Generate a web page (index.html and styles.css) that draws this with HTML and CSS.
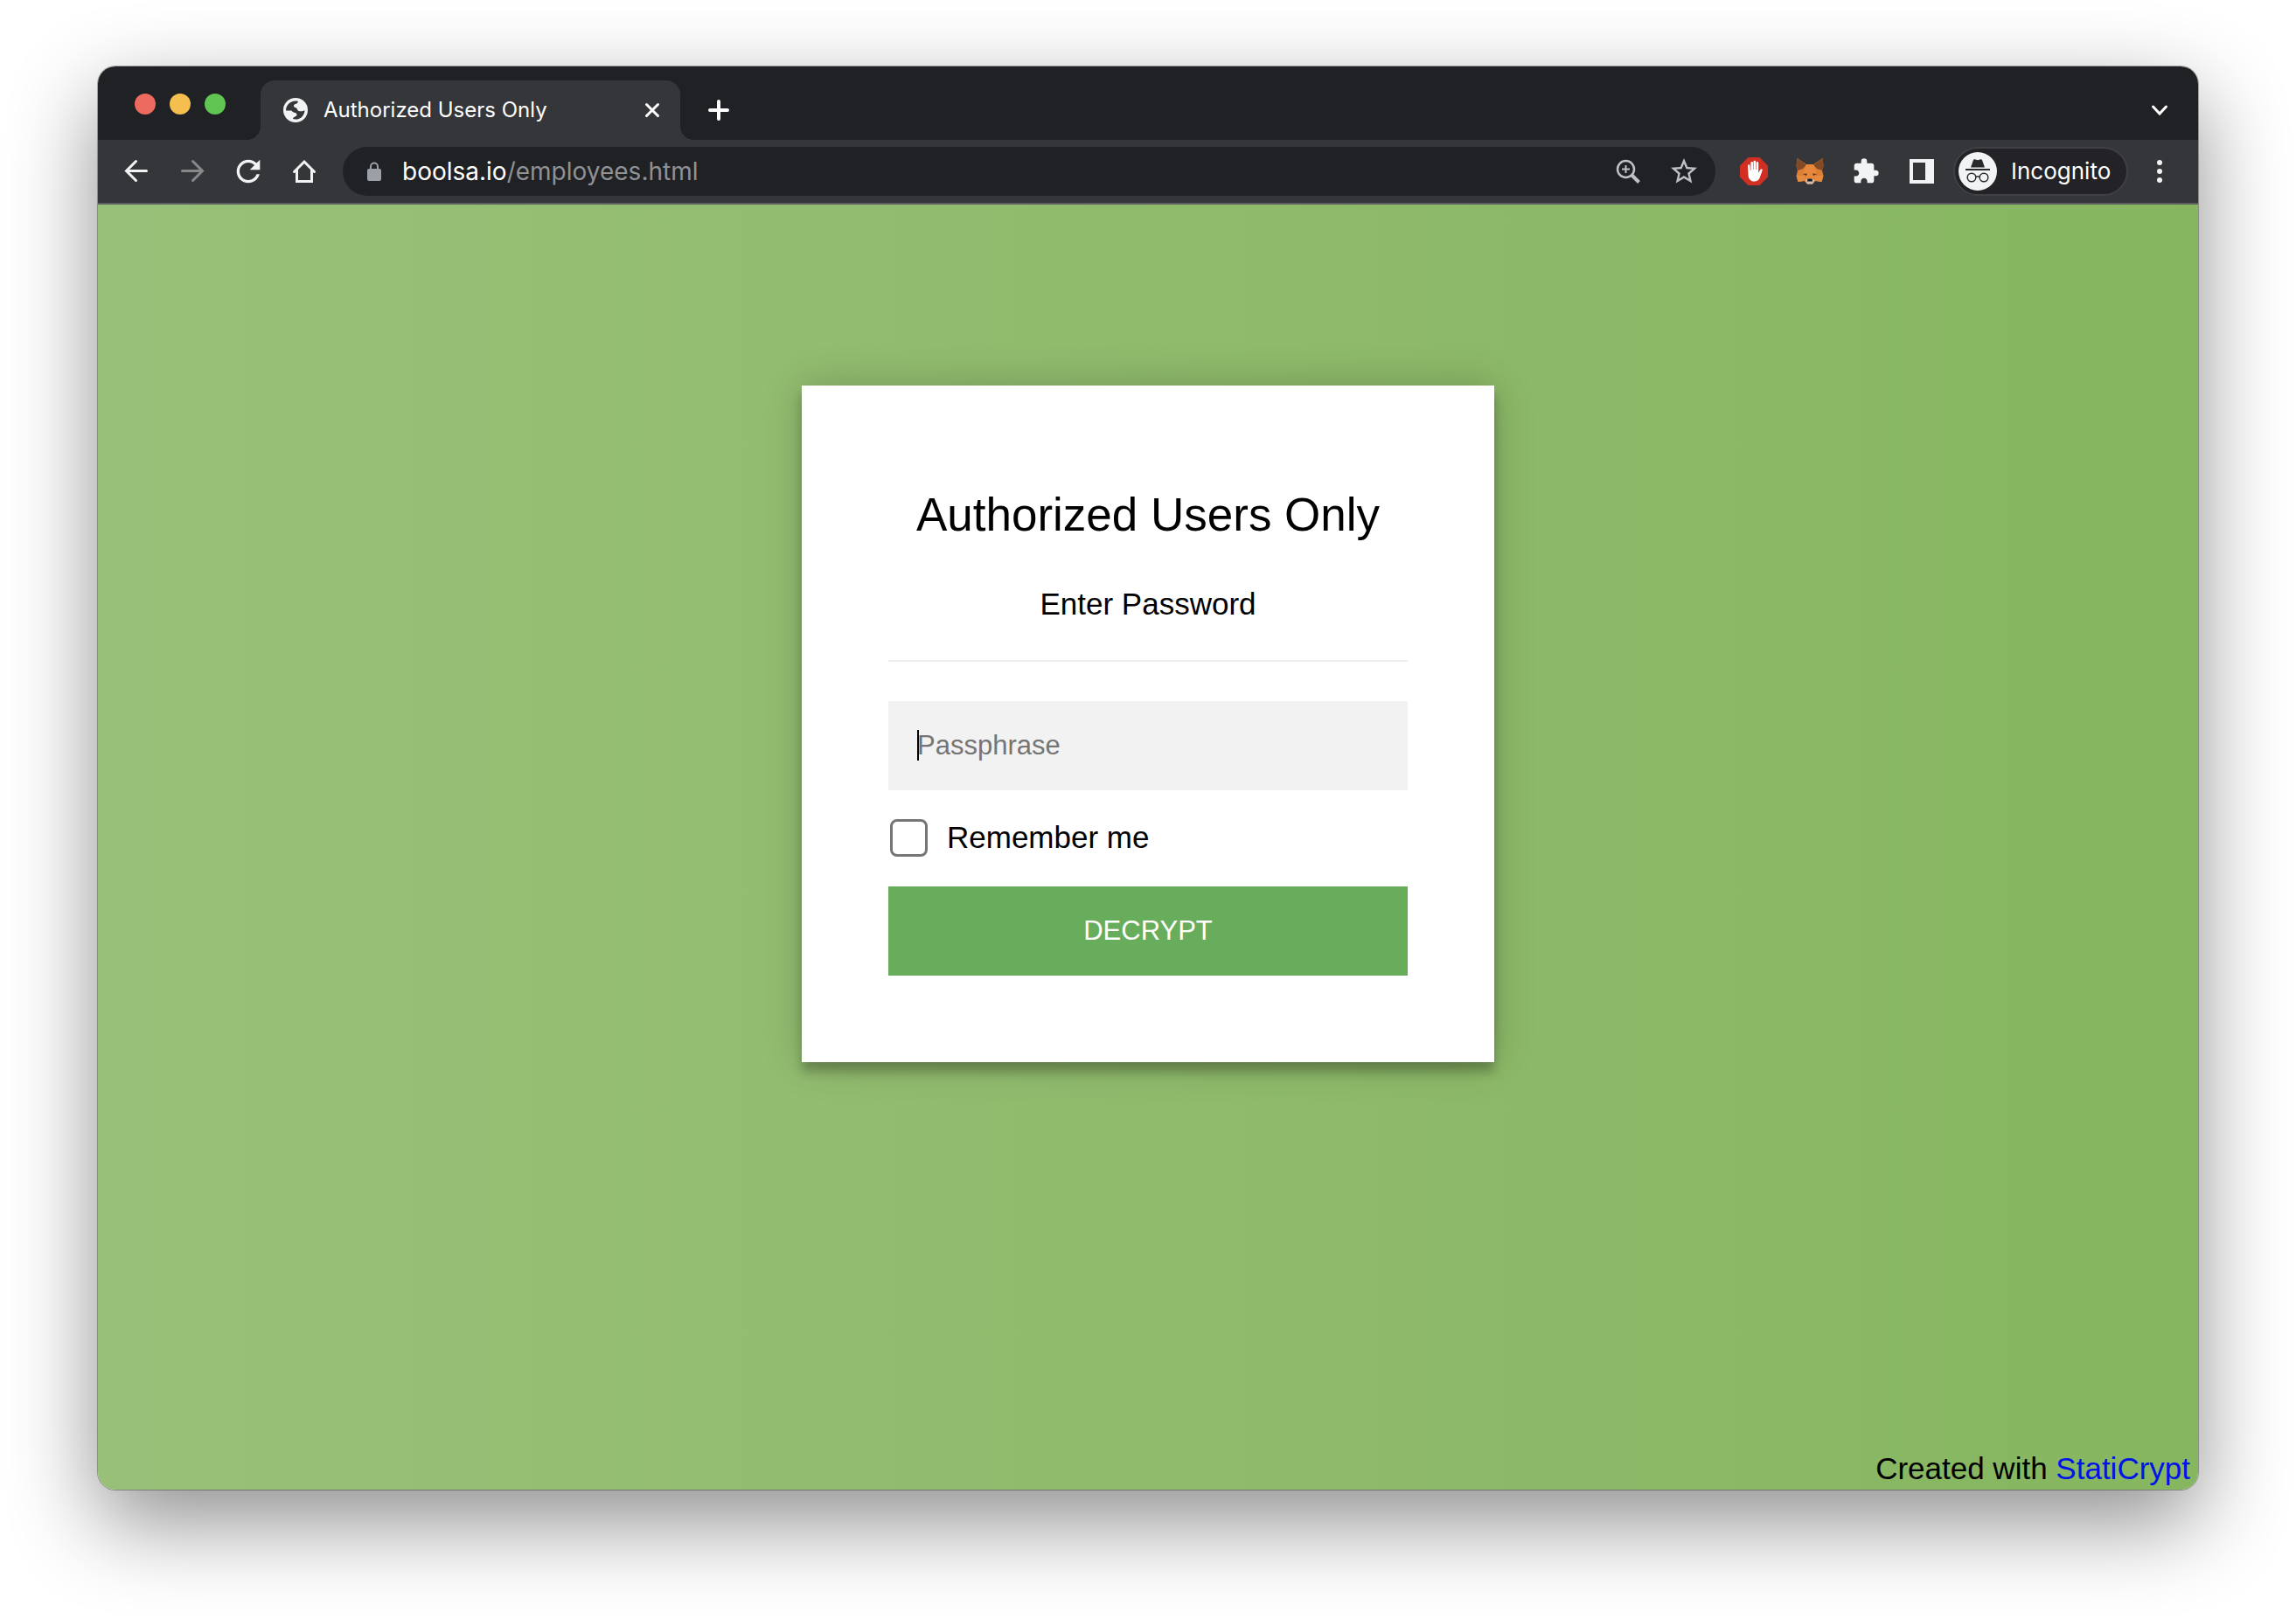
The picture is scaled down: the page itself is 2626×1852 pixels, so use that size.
FILE: index.html
```html
<!DOCTYPE html>
<html lang="en">
<head>
<meta charset="utf-8">
<title>Authorized Users Only</title>
<link rel="stylesheet" href="styles.css">
</head>
<body>
<div class="window">
  <header class="tab-strip">
    <div class="traffic-lights">
      <button class="light light-close" aria-label="Close window"></button>
      <button class="light light-minimize" aria-label="Minimize window"></button>
      <button class="light light-zoom" aria-label="Zoom window"></button>
    </div>
    <div class="tab">
      <svg class="favicon" viewBox="0 0 28 28" width="28" height="28" aria-hidden="true">
        <circle cx="14" cy="14" r="14" fill="#f1f3f4"/>
        <path d="M3 14.500c0-6 4.500-11 11-11 1 0 2 .1 3 .4-.4 1.600-1.300 2.600-3 3-1.300.3-2 .9-2 2 0 1.300.9 2 2.500 2.300 1.700.3 1.300 3.300 3.300 3.900 2.500.6 4.700.2 6.700-1.200-.2 6.200-4.800 10.600-10.500 10.600-1 0-2-.1-3-.4.2-1.500 1-2.300 2.400-2.700 1.500-.4 2.100-1.100 2.100-2.100 0-1.600-1.100-2.500-3-2.600-1.900-.1-2-1.900-3.500-2.200z" fill="#35363a"/>
      </svg>
      <span class="tab-title">Authorized Users Only</span>
      <button class="icon-button tab-close" aria-label="Close tab">
        <svg viewBox="0 0 20 20" width="20" height="20"><path d="M3.500 3.500l13 13M16.500 3.500l-13 13" class="stroke"/></svg>
      </button>
    </div>
    <button class="icon-button new-tab" aria-label="New tab">
      <svg viewBox="0 0 24 24" width="24" height="24"><path d="M12 2v20M2 12h20" class="stroke stroke-bold"/></svg>
    </button>
    <button class="icon-button tab-search" aria-label="Search tabs">
      <svg viewBox="0 0 24 24" width="24" height="24"><path d="M4.500 8l7.500 8 7.500-8" class="stroke"/></svg>
    </button>
  </header>

  <nav class="toolbar" aria-label="Browser toolbar">
    <div class="button-group">
      <button class="icon-button" aria-label="Back">
        <svg viewBox="0 0 32 32" width="32" height="32"><path d="M15.500 4.500L4.500 15.500l11 11M4.500 15.500h23" class="stroke"/></svg>
      </button>
      <button class="icon-button icon-dim" aria-label="Forward">
        <svg viewBox="0 0 32 32" width="32" height="32"><path d="M16.500 4.500l11 11-11 11M27.500 15.500h-23" class="stroke"/></svg>
      </button>
      <button class="icon-button" aria-label="Reload">
        <svg viewBox="0 0 24 24" width="40" height="40"><path d="M17.650 6.350C16.200 4.900 14.210 4 12 4c-4.420 0-7.990 3.580-7.990 8s3.570 8 7.990 8c3.730 0 6.840-2.550 7.730-6h-2.080c-.82 2.330-3.040 4-5.650 4-3.310 0-6-2.690-6-6s2.690-6 6-6c1.660 0 3.140.69 4.220 1.780L13 11h7V4z" fill="currentColor"/></svg>
      </button>
      <button class="icon-button" aria-label="Home">
        <svg viewBox="0 0 32 32" width="32" height="32"><path d="M4.500 16.500L16 5l11.500 11.500M7.500 14v13.500h17V14" class="stroke"/></svg>
      </button>
    </div>
    <div class="address-bar">
      <svg class="lock" viewBox="0 0 16 22" width="16" height="22" aria-hidden="true">
        <rect x="0" y="8" width="16" height="14" rx="2" fill="#9aa0a6"/>
        <path d="M4 8.500V5.500a4 4 0 0 1 8 0v3" fill="none" stroke="#9aa0a6" stroke-width="2"/>
      </svg>
      <span class="url"><span class="url-host">boolsa.io</span>/employees.html</span>
      <button class="icon-button icon-grey" aria-label="Zoom">
        <svg viewBox="0 0 28 28" width="28" height="28" fill="none" stroke="currentColor">
          <circle cx="11.500" cy="11.500" r="9.500" stroke-width="2.500"/>
          <path d="M11.500 7v9M7 11.500h9" stroke-width="2"/>
          <path d="M18 18l8.500 8.500" stroke-width="4"/>
        </svg>
      </button>
      <button class="icon-button icon-grey" aria-label="Bookmark this page">
        <svg viewBox="0 0 24 24" width="36" height="36"><path d="M22 9.240l-7.190-.62L12 2 9.190 8.630 2 9.240l5.460 4.730L5.820 21 12 17.270 18.180 21l-1.630-7.030zM12 15.400l-3.760 2.270 1-4.280-3.320-2.880 4.380-.38L12 6.100l1.710 4.040 4.380.38-3.320 2.880 1 4.280z" fill="currentColor"/></svg>
      </button>
    </div>
    <div class="button-group">
      <button class="icon-button" aria-label="Ad blocker">
        <svg viewBox="0 0 32 32" width="32" height="32">
          <path d="M9.500 0h13L32 9.500v13L22.500 32h-13L0 22.500v-13z" fill="#d22f23"/>
          <path d="M9 9.500c0-1.800 2.400-1.800 2.500 0l.4 5.500h.5V6.500c0-1.900 2.600-1.900 2.600 0V14h.5V5.200c0-1.900 2.700-1.900 2.700 0V14h.5V6.500c0-1.900 2.500-1.900 2.500 0v11.300l2-3.600c.9-1.600 3-.8 2.400.9l-3 8.400C21.500 26.300 19.400 27.500 16.500 27.500c-4 0-6.600-2.600-6.900-6.600z" fill="#fff"/>
        </svg>
      </button>
      <button class="icon-button" aria-label="MetaMask">
        <svg viewBox="0 0 32 32" width="32" height="32">
          <path d="M1.500 1L12 8h8L30.500 1l1 9-1.500 5 1.500 6-2 7-7-1-3.500 3.500h-6L9.500 27l-7 1-2-7L2 15 .5 10z" fill="#dd8035"/>
          <path d="M1.500 1L12 8.500 8 13l-6 2-1.500-5zM30.500 1L20 8.500l4 4.500 6 2 1.500-5z" fill="#834b25"/>
          <path d="M12 8h8l3 8-3 9h-8l-3-9z" fill="#e8883a"/>
          <path d="M.5 21l9.500 0 1 4-1.500 2-7 1zM31.500 21l-9.500 0-1 4 1.500 2 7 1z" fill="#e58a3f"/>
          <path d="M8 19l5-.5-1 2.500zM24 19l-5-.5 1 2.500z" fill="#5a3423"/>
          <path d="M10.500 26l3-1.500h5l3 1.500-2.500 4.500h-6z" fill="#cdbdae"/>
          <path d="M13.500 24.500h5l.5 3h-6z" fill="#17191c"/>
        </svg>
      </button>
      <button class="icon-button" aria-label="Extensions">
        <svg viewBox="0 0 24 24" width="32" height="32"><path d="M20.500 11H19V7c0-1.100-.9-2-2-2h-4V3.500a2.500 2.500 0 0 0-5 0V5H4c-1.100 0-1.990.9-1.990 2v3.800H3.500c1.490 0 2.700 1.210 2.700 2.700s-1.210 2.700-2.700 2.700H2V20c0 1.100.9 2 2 2h3.800v-1.500c0-1.490 1.210-2.700 2.700-2.700s2.700 1.210 2.700 2.700V22H17c1.100 0 2-.9 2-2v-4h1.500a2.500 2.500 0 0 0 0-5z" fill="currentColor"/></svg>
      </button>
      <button class="icon-button" aria-label="Side panel">
        <svg viewBox="0 0 28 28" width="28" height="28"><path d="M0 0h28v28H0zM4 4v20h14V4z" fill="currentColor" fill-rule="evenodd"/></svg>
      </button>
    </div>
    <button class="profile">
      <svg viewBox="0 0 44 44" width="44" height="44" aria-hidden="true">
        <circle cx="22" cy="22" r="22" fill="#f1f3f4"/>
        <path d="M17 9c.3-.8 1-1 1.800-.7l3.200 1 3.200-1c.8-.3 1.500-.1 1.800.7l3 8.500H14z" fill="#292a2d"/>
        <path d="M8 20h28" stroke="#292a2d" stroke-width="2"/>
        <g fill="none" stroke="#292a2d" stroke-width="1.500">
          <circle cx="15" cy="29" r="4.800"/><circle cx="29" cy="29" r="4.800"/><path d="M19.800 28.500q2.200-1.500 4.400 0"/>
        </g>
      </svg>
      <span>Incognito</span>
    </button>
    <button class="icon-button menu-button" aria-label="Menu">
      <svg viewBox="0 0 6 26" width="6" height="26" fill="currentColor"><circle cx="3" cy="3" r="3"/><circle cx="3" cy="13" r="3"/><circle cx="3" cy="23" r="3"/></svg>
    </button>
  </nav>

  <main class="page">
    <form class="card">
      <h1 class="card-title">Authorized Users Only</h1>
      <p class="card-text">Enter Password</p>
      <hr class="divider">
      <div class="field">
        <input class="passphrase" type="password" placeholder="Passphrase" aria-label="Passphrase">
        <span class="caret"></span>
      </div>
      <label class="remember"><input class="checkbox" type="checkbox"> Remember me</label>
      <button class="decrypt" type="button">DECRYPT</button>
    </form>
    <footer class="credit">Created with <a class="credit-link" href="#">StatiCrypt</a></footer>
  </main>
</div>
</body>
</html>
```
FILE: styles.css
```css
* {
  box-sizing: border-box;
}

body {
  margin: 0;
  min-height: 100vh;
  padding: 76px 112px 148px;
  display: flex;
  flex-direction: column;
  background: #fff;
  font-family: "Liberation Sans", Arial, sans-serif;
}

button,
input {
  font-family: inherit;
  margin: 0;
}

button {
  border: 0;
  padding: 0;
  background: none;
  color: inherit;
}

svg {
  display: block;
}

.window {
  flex: 1;
  display: flex;
  flex-direction: column;
  border-radius: 20px;
  overflow: hidden;
  box-shadow: 0 0 0 1px rgba(0, 0, 0, 0.3), 0 36px 100px rgba(0, 0, 0, 0.45);
}

/* Browser frame */

.tab-strip {
  display: flex;
  align-items: flex-end;
  height: 84px;
  padding: 0 12px 0 42px;
  background: #202124;
  color: #fff;
  font-family: Inter, Roboto, sans-serif;
}

.traffic-lights {
  display: flex;
  gap: 16px;
  width: 144px;
  height: 53px;
}

.light {
  width: 24px;
  height: 24px;
  border-radius: 50%;
}

.light-close {
  background: #ed6a5e;
}

.light-minimize {
  background: #f5bf4f;
}

.light-zoom {
  background: #61c554;
}

.tab {
  position: relative;
  display: flex;
  align-items: center;
  width: 480px;
  height: 68px;
  padding: 0 22px 0 26px;
  border-radius: 16px 16px 0 0;
  background: #35363a;
}

.tab::before,
.tab::after {
  content: "";
  position: absolute;
  bottom: 0;
  width: 16px;
  height: 16px;
}

.tab::before {
  right: 100%;
  background: radial-gradient(circle at 0 0, #202124 16px, #35363a 16px);
}

.tab::after {
  left: 100%;
  background: radial-gradient(circle at 100% 0, #202124 16px, #35363a 16px);
}

.tab-title {
  flex: 1;
  padding-left: 18px;
  font-size: 24px;
  line-height: 32px;
  white-space: nowrap;
}

.icon-button {
  display: flex;
  align-items: center;
  justify-content: center;
  flex: none;
  width: 64px;
  height: 56px;
  color: #f1f3f4;
}

.icon-dim {
  color: #87888a;
}

.icon-grey {
  color: #bdc1c6;
}

.stroke {
  fill: none;
  stroke: currentColor;
  stroke-width: 3;
  stroke-linecap: round;
}

.stroke-bold {
  stroke-width: 4;
}

.tab-close {
  width: 20px;
  color: #fff;
}

.new-tab {
  width: 64px;
  height: 68px;
  margin-left: 12px;
  color: #fff;
}

.tab-search {
  height: 68px;
  margin-left: auto;
  color: #fff;
}

.toolbar {
  display: flex;
  align-items: center;
  height: 74px;
  padding: 0 12px;
  border-bottom: 2px solid #5d5e62;
  background: #35363a;
  color: #fff;
  font-family: Inter, Roboto, sans-serif;
}

.button-group {
  display: flex;
}

.address-bar {
  flex: 1;
  display: flex;
  align-items: center;
  height: 56px;
  margin: 0 12px;
  padding: 0 4px 0 28px;
  border-radius: 28px;
  background: #202124;
}

.url {
  flex: 1;
  padding-left: 24px;
  color: #8f9194;
  font-size: 28px;
  line-height: 32px;
}

.url-host {
  color: #fff;
}

.profile {
  display: flex;
  align-items: center;
  gap: 16px;
  width: 200px;
  height: 56px;
  margin: 0 4px;
  padding: 0 0 0 4px;
  border: 2px solid #3f4044;
  border-radius: 28px;
  background: #232327;
  font-size: 26px;
  line-height: 32px;
}

/* Page */

.page {
  flex: 1;
  display: flex;
  flex-direction: column;
  align-items: center;
  padding: 207px 9px 4px;
  background: linear-gradient(to left, #86b660, #99c078);
  color: #000;
}

.card {
  display: flex;
  flex-direction: column;
  width: 100%;
  max-width: 792px;
  padding: 99px;
  background: #fff;
  box-shadow: 0 0 44px rgba(0, 0, 0, 0.2), 0 11px 11px rgba(0, 0, 0, 0.24);
}

.card-title {
  margin: 19px 0 52px;
  font-size: 53px;
  font-weight: 400;
  line-height: 60px;
  text-align: center;
}

.card-text {
  margin: 0;
  font-size: 35px;
  line-height: 40px;
  text-align: center;
}

.divider {
  width: 100%;
  height: 2px;
  margin: 44px 0 45px;
  border: 0;
  background: #eee;
}

.field {
  position: relative;
}

.passphrase {
  display: block;
  width: 100%;
  height: 102px;
  padding: 0 33px;
  border: 0;
  border-radius: 0;
  outline: 0;
  background: #f2f2f2;
  font-size: 31px;
}

.passphrase::placeholder {
  color: #757575;
}

.caret {
  position: absolute;
  top: 33px;
  left: 33px;
  width: 2px;
  height: 35px;
  background: #000;
}

.remember {
  display: flex;
  align-items: center;
  gap: 22px;
  height: 44px;
  margin: 32px 0 34px 2px;
  font-size: 35px;
  line-height: 40px;
}

.checkbox {
  appearance: none;
  width: 43px;
  height: 43px;
  margin: 0;
  border: 3px solid #767676;
  border-radius: 8px;
  background: #fff;
}

.decrypt {
  width: 100%;
  height: 102px;
  background: #68ad5c;
  color: #fff;
  font-size: 31px;
}

.credit {
  align-self: flex-end;
  margin-top: auto;
  font-size: 35px;
  line-height: 40px;
}

.credit-link {
  color: #0014e6;
  text-decoration: none;
}
```
